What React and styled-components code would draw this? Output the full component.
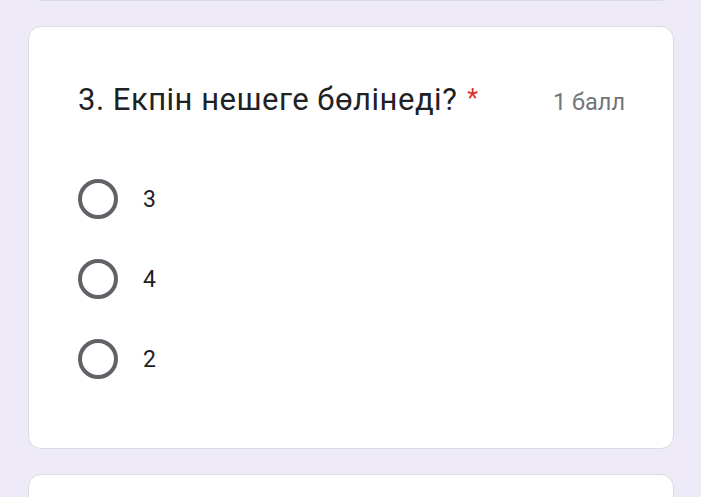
import React from 'react';
import styled, { createGlobalStyle } from 'styled-components';

const GlobalStyle = createGlobalStyle`
  body {
    margin: 0;
    background: #eeeaf7;
    font-family: Roboto, 'Noto Sans', sans-serif;
  }
`;

const Page = styled.div`
  display: flex;
  flex-direction: column;
  gap: 25px;
  padding: 0 27px 0 28px;
  height: 497px;
  overflow: hidden;
`;

const Card = styled.div`
  flex: none;
  background: #ffffff;
  border: 1px solid #dadce0;
  border-radius: 13px;
  box-sizing: border-box;
  height: ${p => p.$height || 'auto'};
  margin-top: ${p => p.$offset || '0'};
`;

const QuestionCard = styled(Card)`
  padding: 55px 48px 69px 49px;
`;

const TitleRow = styled.div`
  display: flex;
  justify-content: space-between;
  align-items: baseline;
`;

const Title = styled.div`
  font-size: 31px;
  line-height: 36px;
  color: #202124;
  letter-spacing: 0.5px;
`;

const Required = styled.span`
  color: #d93025;
  font-size: 25px;
  line-height: 0;
  margin-left: 10px;
  vertical-align: 3px;
`;

const Points = styled.div`
  font-size: 23.5px;
  color: #70757a;
`;

const Options = styled.div`
  display: flex;
  flex-direction: column;
  gap: 40px;
  margin-top: 61px;
`;

const Option = styled.label`
  display: flex;
  align-items: center;
  gap: 25px;
  height: 40px;
`;

const Radio = styled.span`
  width: 40px;
  height: 40px;
  box-sizing: border-box;
  border: 4px solid #5f6368;
  border-radius: 50%;
`;

const OptionText = styled.span`
  font-size: 23px;
  color: #202124;
`;

const options = ['3', '4', '2'];

export default function App() {
  return (
    <>
      <GlobalStyle />
      <Page>
        <Card $height="40px" $offset="-39px" />
        <QuestionCard>
          <TitleRow>
            <Title>
              3. Екпін нешеге бөлінеді?<Required>*</Required>
            </Title>
            <Points>1 балл</Points>
          </TitleRow>
          <Options>
            {options.map(o => (
              <Option key={o}>
                <Radio />
                <OptionText>{o}</OptionText>
              </Option>
            ))}
          </Options>
        </QuestionCard>
        <Card $height="60px" />
      </Page>
    </>
  );
}
